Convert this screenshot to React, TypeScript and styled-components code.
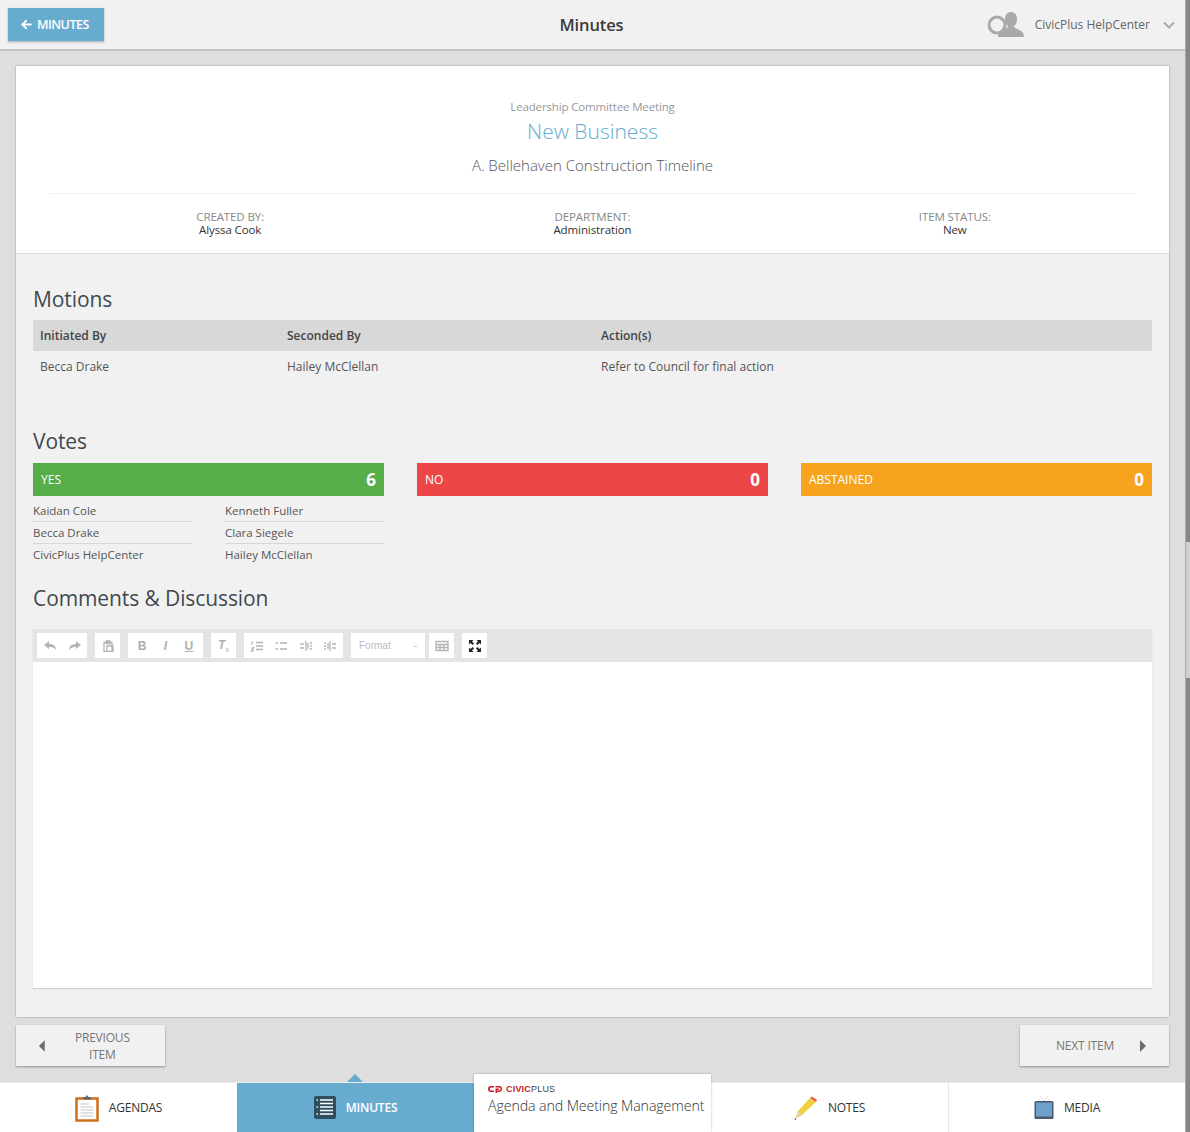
import React from 'react';
import styled, { createGlobalStyle } from 'styled-components';

const Global = createGlobalStyle`
  html, body { margin: 0; padding: 0; background: #dedede; }
  * { box-sizing: border-box; }
  body { font-family: "Open Sans", "Liberation Sans", sans-serif; color: #444; }
`;
const Page = styled.div`width: 1190px; height: 1132px; display: flex; overflow: hidden; background: #dedede;`;
const Main = styled.div`width: 1185px; display: flex; flex-direction: column;`;
const Rail = styled.div`
  width: 5px; border-left: 1px solid #aaa; background: #cfcfcf; display: flex; flex-direction: column;
`;
const Thumb = styled.div<{ $h: number }>`height: ${p => p.$h}px; background: #868686; flex: none;`;
const Gap = styled.div`flex: 1;`;
const Header = styled.header`
  height: 51px; flex: none; background: #f1f1f1; border-bottom: 2px solid #c4c4c4;
  display: grid; grid-template-columns: 1fr auto 1fr; align-items: center; padding: 0 10px 0 8px;
`;
const BackBtn = styled.button`
  justify-self: start; width: 96px; height: 33px; margin-top: -1px; border: 0; background: #67abcf; color: #fff;
  box-shadow: 0 1px 2px rgba(0,0,0,.3); font: 600 12.5px "Open Sans", sans-serif; letter-spacing: -.5px;
  display: flex; align-items: center; gap: 5px; padding: 0 0 0 12px;
`;
const HeaderTitle = styled.h1`margin: 0; font-size: 16.5px; font-weight: 600; color: #3a3a3a; letter-spacing: -.1px;`;
const UserMenu = styled.div`justify-self: end; display: flex; align-items: center; font-size: 12px; color: #666;`;
const UserName = styled.span`margin: 0 13px 0 10px;`;
const Scroll = styled.div`flex: 1; padding: 15px 16px 0; min-height: 0;`;
const Card = styled.main`
  width: 1153px; height: 951px; background: #f1f1f1; box-shadow: 0 0 2px rgba(0,0,0,.35);
  display: flex; flex-direction: column;
`;
const Intro = styled.section`
  height: 188px; flex: none; background: #fff; border-bottom: 1px solid #ddd; padding: 33px 33px 0;
  text-align: center;
`;
const Org = styled.div`font-size: 11.5px; line-height: 16px; color: #999; letter-spacing: -.15px;`;
const Section = styled.div`font-size: 21px; line-height: 32px; font-weight: 300; color: #67abcf; margin-top: 0;`;
const ItemName = styled.div`font-size: 15px; line-height: 22px; font-weight: 300; color: #555; margin-top: 7px;`;
const Meta = styled.div`
  display: grid; grid-template-columns: repeat(3, 1fr); margin-top: 17px; padding-top: 16px; border-top: 1px solid #f0f0f0;
`;
const MetaCell = styled.div`font-size: 11.5px; line-height: 13px; color: #333; letter-spacing: -.1px;`;
const MetaLabel = styled.div`color: #888;`;
const Body = styled.section`flex: 1; padding: 0 17px; display: flex; flex-direction: column;`;
const H2 = styled.h2<{ $top: number }>`
  margin: ${p => p.$top}px 0 0; font-size: 21px; line-height: 30px; font-weight: 400; color: #3f4a50; letter-spacing: -.1px;
`;
const Table = styled.div`margin-top: 6px;`;
const TRow = styled.div<{ $head?: boolean }>`
  display: grid; grid-template-columns: 247px 314px 1fr; padding-left: 7px; height: 31px; align-items: center;
  font-size: 12px; font-weight: ${p => (p.$head ? 600 : 400)};
  background: ${p => (p.$head ? '#d8d8d8' : 'transparent')}; color: ${p => (p.$head ? '#444' : '#555')};
`;
const VoteGrid = styled.div`display: grid; grid-template-columns: repeat(3, 351px); column-gap: 33px; margin-top: 7px;`;
const VoteBar = styled.div<{ $c: string }>`
  height: 33px; background: ${p => p.$c}; color: #fff; display: flex; justify-content: space-between; align-items: center;
  padding: 0 8px; font-size: 12px;
`;
const VoteCount = styled.b`font-size: 17px; font-weight: 700;`;
const Names = styled.div`display: grid; grid-template-columns: repeat(2, 159px); column-gap: 33px; margin-top: 4px;`;
const Name = styled.div<{ $last?: boolean }>`
  height: 22px; line-height: 22px; font-size: 11.5px; color: #555;
  border-bottom: ${p => (p.$last ? 0 : '1px solid #d6d6d6')};
`;
const Editor = styled.div`margin-top: 16px; height: 359px; display: flex; flex-direction: column; box-shadow: 0 1px 1px rgba(0,0,0,.12);`;
const Toolbar = styled.div`
  height: 33px; flex: none; background: #e4e4e4; display: flex; align-items: center; padding-left: 4px;
`;
const TGroup = styled.div<{ $w: number; $gap?: number }>`
  width: ${p => p.$w}px; height: 25px; background: #fff; margin-right: ${p => p.$gap ?? 8}px; flex: none;
  display: flex; align-items: center; justify-content: space-around; color: #b4b4b4; padding: 0 1px;
`;
const TChar = styled.span<{ $i?: boolean; $u?: boolean }>`
  font: ${p => (p.$i ? 'italic' : 'normal')} 700 12px "Liberation Sans", sans-serif; color: #b0b0b0;
  text-decoration: ${p => (p.$u ? 'underline' : 'none')};
`;
const TSub = styled.sub`font-size: 7px; font-style: normal; font-weight: 400;`;
const FormatBox = styled(TGroup)`
  justify-content: space-between; padding: 0 8px; font: 10px "Liberation Sans", sans-serif; color: #bbb;
`;
const EditArea = styled.div`flex: 1; background: #fff;`;
const Pager = styled.div`height: 65px; flex: none; display: flex; justify-content: space-between; padding-top: 8px;`;
const PageBtn = styled.button`
  width: 149px; height: 41px; border: 0; background: #f1f1f1; box-shadow: 0 1px 2px rgba(0,0,0,.35);
  display: flex; align-items: center; padding: 0 22px; gap: 16px; color: #777;
  font: 400 12px "Open Sans", sans-serif; letter-spacing: -.2px;
`;
const NextBtn = styled(PageBtn)`justify-content: flex-end;gap: 25px;`;
const Tabs = styled.nav`height: 50px; flex: none; display: grid; grid-template-columns: repeat(5, 237px); background: #fff; border-top: 1px solid #eee;`;
const Tab = styled.div<{ $active?: boolean; $divider?: boolean }>`
  position: relative; display: flex; align-items: center; justify-content: center; gap: 10px;
  font-size: 12px; font-weight: ${p => (p.$active ? 600 : 400)}; letter-spacing: -.2px;
  background: ${p => (p.$active ? '#67abcf' : '#fff')}; color: ${p => (p.$active ? '#fff' : '#333')};
  border-left: ${p => (p.$divider ? '1px solid #e8e8e8' : 0)};
`;
const Caret = styled.span`
  position: absolute; left: 110px; top: -9px; width: 0; height: 0;
  border-left: 8px solid transparent; border-right: 8px solid transparent; border-bottom: 8px solid #67abcf;
`;
const LogoTab = styled.div`
  position: relative; margin-top: -9px; background: #fff; z-index: 1; box-shadow: 0 0 2px rgba(0,0,0,.3);
  padding: 10px 0 0 14px;
`;
const Brand = styled.div`display: flex; align-items: center; gap: 4px; font: 700 9px "Liberation Sans", sans-serif; color: #c8202f; letter-spacing: .2px;`;
const BrandPlus = styled.span`color: #444; font-weight: 400;`;
const Product = styled.div`font-size: 14.2px; font-weight: 300; color: #333; line-height: 20px; margin-top: 2px; white-space: nowrap; letter-spacing: -.1px;`;

const UserIcon = () => (
  <svg width="38" height="28" viewBox="0 0 38 28">
    <circle cx="10" cy="14" r="8" fill="none" stroke="#aaa" strokeWidth="3" />
    <path d="M24 1c4 0 6 3 6 7 0 3-1 6-3 7 0 2 4 3 7 5 2 1 3 3 3 6H11c0-3 1-5 3-6 3-2 7-3 7-5-2-1-3-4-3-7 0-4 2-7 6-7z" fill="#a9a9a9" />
  </svg>
);
const Chevron = () => (
  <svg width="12" height="8" viewBox="0 0 12 8"><path d="M1 1.5l5 5 5-5" fill="none" stroke="#aaa" strokeWidth="2" /></svg>
);
const BackArrow = () => (
  <svg width="12" height="11" viewBox="0 0 12 11"><path d="M6 .5L1 5.5l5 5 1.3-1.4-2.6-2.5H11.5V4.4H4.7l2.6-2.5z" fill="#fff" /></svg>
);
const Tri = ({ right }: { right?: boolean }) => (
  <svg width="8" height="12" viewBox="0 0 8 12"><path d={right ? 'M1 0l6 6-6 6z' : 'M7 0L1 6l6 6z'} fill="#6d6d6d" /></svg>
);
const Ic = ({ d, w = 14 }: { d: string; w?: number }) => (
  <svg width={w} height="12" viewBox="0 0 14 12"><path d={d} fill="none" stroke="#b4b4b4" strokeWidth="1.3" /></svg>
);
const Undo = () => <svg width="13" height="11" viewBox="0 0 13 11"><path d="M5 1L0 5l5 4V7c3 0 5 .5 7 3 0-4-3-6-7-6z" fill="#b4b4b4" /></svg>;
const Redo = () => <svg width="13" height="11" viewBox="0 0 13 11"><path d="M8 1l5 4-5 4V7c-3 0-5 .5-7 3 0-4 3-6 7-6z" fill="#b4b4b4" /></svg>;
const Maximize = () => (
  <svg width="12" height="12" viewBox="0 0 12 12" fill="#222">
    <path d="M0 0h4.5L3 1.5 5 3.5 3.5 5 1.5 3 0 4.5zM12 0v4.5L10.5 3l-2 2L7 3.5l2-2L7.5 0zM0 12V7.5L1.5 9l2-2L5 8.5l-2 2L4.5 12zM12 12H7.500L9 10.500l-2-2L8.500 7l2 2L12 7.500z" />
  </svg>
);
const Clipboard = () => (
  <svg width="24" height="28" viewBox="0 0 24 28">
    <rect x="1.500" y="4.500" width="21" height="22" fill="#fff" stroke="#d0701c" strokeWidth="2.500" />
    <path d="M8 5V3h2.500l1.500-2 1.500 2H16v2.500H8z" fill="#666" />
    <path d="M5.500 10h9M5.500 13h13M5.500 16h13M5.500 19h13M5.500 22h13" stroke="#d8d8d8" strokeWidth="1.500" />
  </svg>
);
const ListIcon = () => (
  <svg width="22" height="23" viewBox="0 0 22 23">
    <rect width="22" height="23" rx="2" fill="#2f4f60" />
    <path d="M6 4h13M6 7.500h13M6 11h13M6 14.500h13M6 18h13" stroke="#fff" strokeWidth="1.500" />
    <path d="M2.500 4h1.500M2.500 11h1.500M2.500 18h1.500" stroke="#cfe" strokeWidth="1.500" />
  </svg>
);
const Pencil = () => (
  <svg width="24" height="24" viewBox="0 0 24 24">
    <path d="M2 22l2-7L16 2l6 4L8 19z" fill="#f0d040" />
    <path d="M16 2l2-1.500 5 3.500-1 2z" fill="#e85a4a" />
    <path d="M2 22l2-7 4 4z" fill="#e8d0a0" />
    <circle cx="1.500" cy="23" r=".8" fill="#333" />
  </svg>
);
const Tablet = () => (
  <svg width="20" height="24" viewBox="0 0 20 24">
    <path d="M6 0l4 5 4-5" fill="none" stroke="#ddd" strokeWidth="1" />
    <rect x=".5" y="5" width="19" height="18" rx="1.500" fill="#4a5a68" />
    <rect x="2" y="6.500" width="16" height="14" fill="#6da0cc" />
  </svg>
);
const CpMark = () => (
  <svg width="14" height="8" viewBox="0 0 14 8">
    <path d="M6 1H3a3 3 0 0 0 0 6h3V5.500H3.200a1.500 1.500 0 0 1 0-3H6zM7.500 1H11a3 3 0 0 1 0 6H9v1H7.500V3.500H11v1.500H9v.500h2a1.500 1.500 0 0 0 0-3H7.500z" fill="#c8202f" />
  </svg>
);

const votes = [
  { label: 'YES', count: 6, color: '#55ae47' },
  { label: 'NO', count: 0, color: '#ec4646' },
  { label: 'ABSTAINED', count: 0, color: '#f8a31e' },
];
const voters = ['Kaidan Cole', 'Kenneth Fuller', 'Becca Drake', 'Clara Siegele', 'CivicPlus HelpCenter', 'Hailey McClellan'];
const meta = [
  ['CREATED BY:', 'Alyssa Cook'],
  ['DEPARTMENT:', 'Administration'],
  ['ITEM STATUS:', 'New'],
];

export default function App() {
  return (
    <Page>
      <Global />
      <Main>
        <Header>
          <BackBtn><BackArrow />MINUTES</BackBtn>
          <HeaderTitle>Minutes</HeaderTitle>
          <UserMenu><UserIcon /><UserName>CivicPlus HelpCenter</UserName><Chevron /></UserMenu>
        </Header>
        <Scroll>
          <Card>
            <Intro>
              <Org>Leadership Committee Meeting</Org>
              <Section>New Business</Section>
              <ItemName>A. Bellehaven Construction Timeline</ItemName>
              <Meta>
                {meta.map(([l, v]) => (
                  <MetaCell key={l}><MetaLabel>{l}</MetaLabel>{v}</MetaCell>
                ))}
              </Meta>
            </Intro>
            <Body>
              <H2 $top={30}>Motions</H2>
              <Table>
                <TRow $head><span>Initiated By</span><span>Seconded By</span><span>Action(s)</span></TRow>
                <TRow><span>Becca Drake</span><span>Hailey McClellan</span><span>Refer to Council for final action</span></TRow>
              </Table>
              <H2 $top={44}>Votes</H2>
              <VoteGrid>
                {votes.map(v => (
                  <div key={v.label}>
                    <VoteBar $c={v.color}><span>{v.label}</span><VoteCount>{v.count}</VoteCount></VoteBar>
                    {v.label === 'YES' && (
                      <Names>{voters.map((n, i) => <Name key={n} $last={i > 3}>{n}</Name>)}</Names>
                    )}
                  </div>
                ))}
              </VoteGrid>
              <H2 $top={17}>Comments &amp; Discussion</H2>
              <Editor>
                <Toolbar>
                  <TGroup $w={50}><Undo /><Redo /></TGroup>
                  <TGroup $w={25}>
                    <Ic d="M3 2.500h8v9H3zM5 1h4v2.500H5zM6 6h6v5.500H6z" />
                  </TGroup>
                  <TGroup $w={75}><TChar>B</TChar><TChar $i>I</TChar><TChar $u>U</TChar></TGroup>
                  <TGroup $w={25}><TChar $i>T<TSub>x</TSub></TChar></TGroup>
                  <TGroup $w={99}>
                    <Ic d="M6 2.500h7M6 6h7M6 9.500h7M2 1.500v3M1.500 8h2l-2 3h2" />
                    <Ic d="M6 3h7M6 9h7M1.500 3h2.500M1.500 9h2.500" />
                    <Ic d="M7 1v10M1 4h4M1 8h4M9 3v6M11 3h2M11 6h2M11 9h2" />
                    <Ic d="M7 1v10M9 4h4M9 8h4M5 3v6M1 3h2M1 6h2M1 9h2" />
                  </TGroup>
                  <FormatBox $w={74} $gap={4}><span>Format</span><span>-</span></FormatBox>
                  <TGroup $w={25}>
                    <Ic d="M1 1.500h12v9H1zM1 4.500h12M1 7.500h12M5 4.500v6M9 4.500v6" />
                  </TGroup>
                  <TGroup $w={25}><Maximize /></TGroup>
                </Toolbar>
                <EditArea />
              </Editor>
            </Body>
          </Card>
          <Pager>
            <PageBtn><Tri />PREVIOUS ITEM</PageBtn>
            <NextBtn>NEXT ITEM<Tri right /></NextBtn>
          </Pager>
        </Scroll>
        <Tabs>
          <Tab><Clipboard />AGENDAS</Tab>
          <Tab $active><Caret /><ListIcon />MINUTES</Tab>
          <LogoTab>
            <Brand><CpMark /><span>CIVIC<BrandPlus>PLUS</BrandPlus></span></Brand>
            <Product>Agenda and Meeting Management</Product>
          </LogoTab>
          <Tab><Pencil />NOTES</Tab>
          <Tab $divider><Tablet />MEDIA</Tab>
        </Tabs>
      </Main>
      <Rail>
        <Thumb $h={542} />
        <Gap />
        <Thumb $h={454} />
      </Rail>
    </Page>
  );
}
